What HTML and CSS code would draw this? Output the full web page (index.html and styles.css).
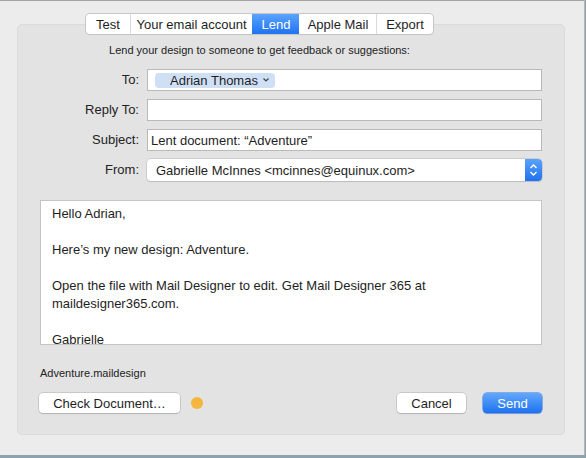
FILE: index.html
```html
<!DOCTYPE html>
<html lang="en">
<head>
    <meta charset="UTF-8">
    <title>Lend document</title>
    <link rel="stylesheet" href="styles.css">
</head>
<body>
    <div class="window">
        <!-- tab bar -->
        <div class="tabs">
            <span class="tab tab-test">Test</span>
            <span class="tab tab-account">Your email account</span>
            <span class="tab tab-lend active">Lend</span>
            <span class="tab tab-apple">Apple Mail</span>
            <span class="tab tab-export">Export</span>
        </div>

        <div class="panel">
            <p class="intro">Lend your design to someone to get feedback or suggestions:</p>

            <div class="form">
                <label>To:</label>
                <div class="field">
                    <span class="token">Adrian Thomas
                        <svg width="8" height="6" viewBox="0 0 8 6"><path d="M1.5 1.5 L4 4 L6.5 1.5" fill="none" stroke="#444" stroke-width="1.2"/></svg>
                    </span>
                </div>

                <label>Reply To:</label>
                <div class="field"></div>

                <label>Subject:</label>
                <div class="field">Lent document: “Adventure”</div>

                <label>From:</label>
                <div class="popup">
                    <span class="popup-text">Gabrielle McInnes &lt;mcinnes@equinux.com&gt;</span>
                    <span class="stepper">
                        <svg width="17" height="22" viewBox="0 0 17 22"><path d="M5.5 9 L8.5 6 L11.5 9" fill="none" stroke="#fff" stroke-width="1.4"/><path d="M5.5 13 L8.5 16 L11.5 13" fill="none" stroke="#fff" stroke-width="1.4"/></svg>
                    </span>
                </div>
            </div>

            <div class="message">
                Hello Adrian,<br>
                <br>
                Here’s my new design: Adventure.<br>
                <br>
                Open the file with Mail Designer to edit. Get Mail Designer 365 at<br>
                maildesigner365.com.<br>
                <br>
                Gabrielle
            </div>

            <div class="attachment">Adventure.maildesign</div>

            <div class="actions">
                <button class="btn btn-check">Check Document…</button>
                <span class="dot"></span>
                <span class="spacer"></span>
                <button class="btn btn-cancel">Cancel</button>
                <button class="btn btn-send">Send</button>
            </div>
        </div>
    </div>
</body>
</html>
```

FILE: styles.css
```css
body {
    margin: 0;
    padding: 0;
    background-color: #8ea2ad; /* desktop strip */
    font-family: "Liberation Sans", Arial, sans-serif;
    color: #1e1e1e;
    overflow: hidden;
}

.window {
    box-sizing: border-box;
    width: 585px;
    height: 455px;
    padding: 13px 0 0 17px;
    background-color: #ececec;
    border-top: 1px solid #a4a4a4;
    border-right: 1px solid #b6b6b6;
}

/* segmented control */
.tabs {
    position: relative;
    z-index: 1;
    display: flex;
    width: max-content;
    height: 20px;
    margin-left: 69px;
    background: #fff;
    border-radius: 4px;
    box-shadow: 0 0 0 1px #c6c6c6, 0 1px 1px rgba(0, 0, 0, 0.12);
    overflow: hidden;
}

.tab {
    display: flex;
    align-items: center;
    justify-content: center;
    font-size: 13px;
    border-left: 1px solid #dadada;
}

.tab:first-child {
    border-left: none;
}

.tab-test { width: 44px; }
.tab-account { width: 121px; }
.tab-lend { width: 46px; }
.tab-apple { width: 76px; }
.tab-export { width: 56px; }

.tab.active {
    color: #fff;
    border-left-color: transparent;
    background: linear-gradient(#5ba3fb, #1f73f2);
}

.tab.active + .tab {
    border-left-color: transparent;
}

.panel {
    width: 548px;
    box-sizing: border-box;
    margin-top: -10px;
    padding: 18px 22px 21px 22px;
    background-color: #e3e3e3;
    border: 1px solid #dadada;
    border-radius: 5px;
}

/* centred under the tab bar, not the panel */
.intro {
    margin: 0 63px 12px 0;
    font-size: 11px;
    line-height: 14px;
    text-align: center;
    color: #222;
}

.form {
    display: grid;
    grid-template-columns: 99px 1fr;
    column-gap: 8px;
    row-gap: 8px;
}

.form label {
    font-size: 13px;
    line-height: 22px;
    text-align: right;
    color: #222;
}

.field {
    box-sizing: border-box;
    height: 22px;
    padding-left: 3px;
    display: flex;
    align-items: center;
    font-size: 13px;
    background: #fff;
    border: 1px solid #b9b9b9;
}

.token {
    display: flex;
    align-items: center;
    gap: 4px;
    height: 15px;
    margin-left: 4px;
    padding: 0 5px 0 15px;
    font-size: 13px;
    background-color: #cfe0f6;
    border-radius: 4px;
}

.popup {
    box-sizing: border-box;
    height: 22px;
    display: flex;
    align-items: center;
    background: #fff;
    border-radius: 4px;
    box-shadow: 0 0 0 0.5px #b8b8b8, 0 1px 1px rgba(0, 0, 0, 0.15);
    overflow: hidden;
}

.popup-text {
    flex: 1;
    padding-left: 9px;
    font-size: 13px;
}

.stepper {
    display: flex;
    width: 17px;
    height: 22px;
    background: linear-gradient(#5aa3fb, #1f72f2);
}

.message {
    box-sizing: border-box;
    height: 145px;
    margin-top: 19px;
    padding: 4px 11px 0 11px;
    font-size: 13px;
    line-height: 18px;
    background: #fff;
    border: 1px solid #c4c4c4;
    overflow: hidden;
}

.attachment {
    margin-top: 21px;
    font-size: 11px;
    line-height: 14px;
    color: #222;
}

.actions {
    display: flex;
    align-items: center;
    height: 20px;
    margin-top: 13px;
}

.btn {
    box-sizing: border-box;
    height: 20px;
    padding: 0;
    font-family: "Liberation Sans", Arial, sans-serif;
    font-size: 13px;
    color: #1e1e1e;
    background: #fff;
    border: none;
    border-radius: 4px;
    box-shadow: 0 0 0 0.5px #b0b0b0, 0 1px 1px rgba(0, 0, 0, 0.18);
}

.btn-check {
    width: 141px;
    margin-left: -1px;
}

.dot {
    width: 12px;
    height: 12px;
    margin-left: 11px;
    border-radius: 50%;
    background-color: #f5b640;
}

.spacer {
    flex: 1;
}

.btn-cancel {
    width: 69px;
}

.btn-send {
    width: 59px;
    margin-left: 17px;
    color: #fff;
    background: linear-gradient(#62a8fb, #1e72f2);
    box-shadow: 0 0 0 0.5px #2a74e0, 0 1px 1px rgba(0, 0, 0, 0.15);
}
```
